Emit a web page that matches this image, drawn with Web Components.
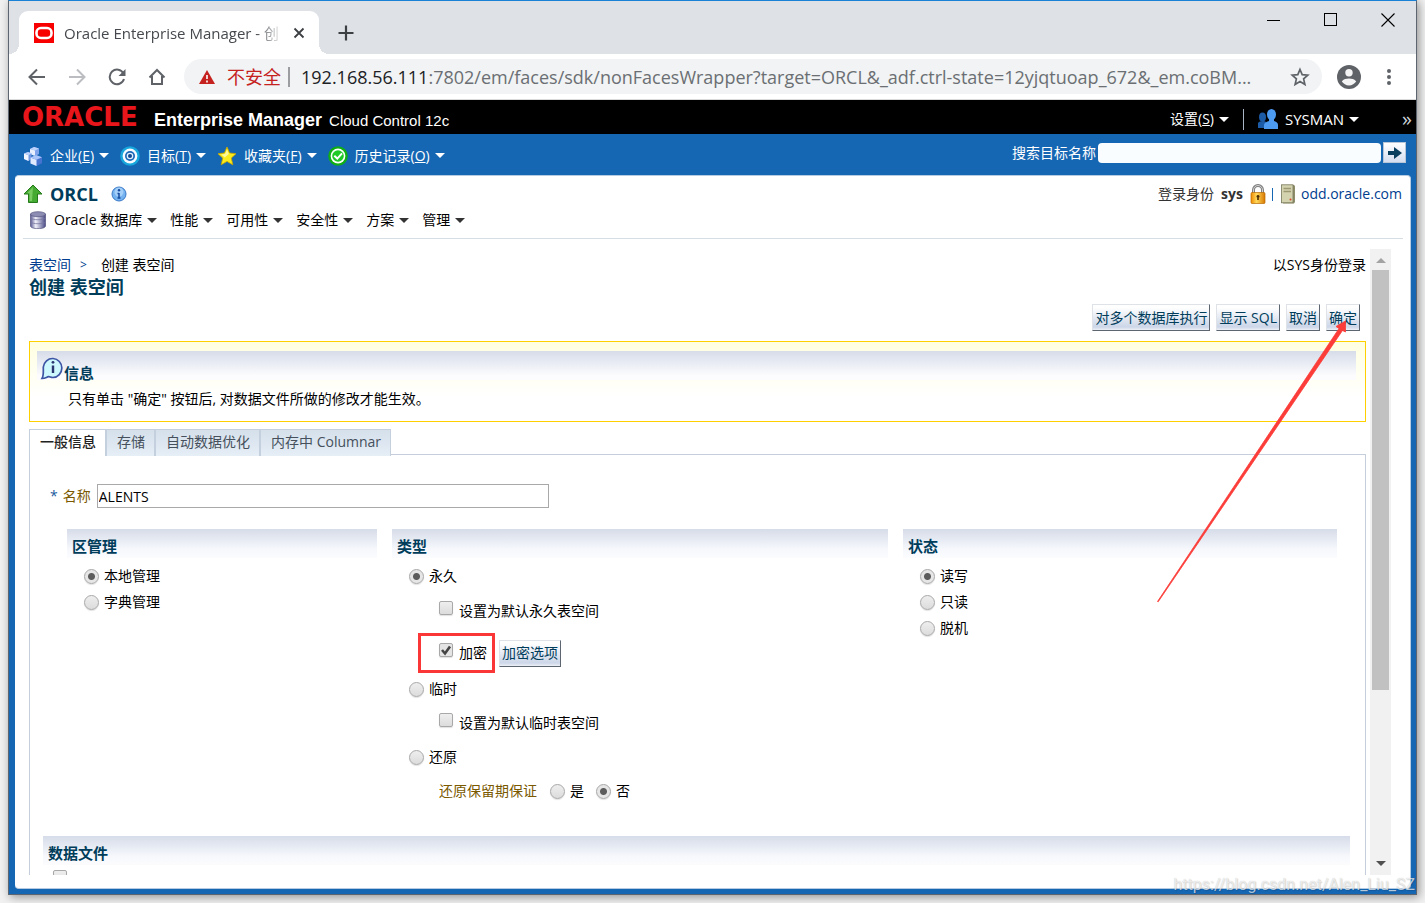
<!DOCTYPE html>
<html lang="zh-CN">
<head>
<meta charset="utf-8">
<title>Oracle Enterprise Manager - 创建 表空间</title>
<style>
html, body { margin: 0; height: 100%; }
body { background: #f1f1f1; font: 14px/20px "Open Sans", "Noto Sans CJK SC", sans-serif; color: #000; overflow: hidden; }
</style>
</head>
<body>
<app-window>
  <browser-tabs slot="chrome"></browser-tabs>
  <browser-toolbar slot="chrome"></browser-toolbar>
  <em-brand-bar></em-brand-bar>
  <em-nav-bar></em-nav-bar>
  <em-panel>
    <em-target-header></em-target-header>
    <em-scroll-area>
      <em-page-head></em-page-head>
      <em-info-box>
        <span slot="title">信息</span>
        只有单击 "确定" 按钮后, 对数据文件所做的修改才能生效。
      </em-info-box>
      <em-tab-set></em-tab-set>
      <em-tablespace-form></em-tablespace-form>
      <pointer-arrow></pointer-arrow>
    </em-scroll-area>
  </em-panel>
</app-window>
<page-watermark>https://blog.csdn.net/Alen_Liu_SZ</page-watermark>

<script>
const BASE = `
  :host, *, *::before, *::after { box-sizing: border-box; }
  button, input { font: inherit; color: inherit; margin: 0; }
  button { padding: 0; border: 0; background: none; cursor: pointer; }
  svg { display: block; flex: none; }
  a { color: inherit; text-decoration: none; }
`;

function define(name, css, html) {
  const template = document.createElement('template');
  template.innerHTML = `<style>${BASE}${css}</style>${html}`;
  customElements.define(name, class extends HTMLElement {
    constructor() {
      super();
      this.attachShadow({ mode: 'open' }).append(template.content.cloneNode(true));
    }
  });
}

/* Icons */
const ICONS = {
  favicon: [20, `<rect width="20" height="20" fill="#f80000"/><rect x="2.500" y="5" width="15" height="10" rx="4.500" fill="none" stroke="#fff" stroke-width="2.600"/>`],
  close: [12, `<path d="M1.500 1.500l9 9M10.500 1.500l-9 9" stroke="#3c4043" stroke-width="1.800"/>`],
  plus: [16, `<path d="M8 .5v15M.5 8h15" stroke="#3c4043" stroke-width="2.200"/>`],
  back: [18, `<path d="M17 9H2M9 1.500L1.500 9 9 16.500" fill="none" stroke="#5f6368" stroke-width="2"/>`],
  forward: [18, `<path d="M1 9h15M9 1.500L16.500 9 9 16.500" fill="none" stroke="#bbbdc0" stroke-width="2"/>`],
  reload: [18, `<path d="M15.500 5.500A7.300 7.300 0 1 0 16 11" fill="none" stroke="#5f6368" stroke-width="2"/><path d="M17.500 1v7h-7z" fill="#5f6368"/>`],
  home: [18, `<path d="M1.500 9.500L9 2l7.500 7.500M4 8v8h10V8" fill="none" stroke="#5f6368" stroke-width="2"/>`],
  warning: [16, `<path d="M8 1l8 14H0z" fill="#c5221f"/><path d="M8 6v4M8 11.500v2" stroke="#fff" stroke-width="1.600"/>`],
  star: [20, `<path d="M10 2.500l2.200 5.200 5.600.5-4.200 3.700 1.300 5.500L10 14.500l-4.900 2.900 1.300-5.500-4.200-3.700 5.600-.5z" fill="none" stroke="#5f6368" stroke-width="1.700"/>`],
  profile: [24, `<circle cx="12" cy="12" r="12" fill="#5f6368"/><circle cx="12" cy="7.800" r="3.700" fill="#f4f4f5"/><path d="M4.800 16.500c1.400-2.400 4.800-3 7.200-3s5.800.6 7.200 3c-1.600 2.400-4.200 3.900-7.200 3.900s-5.600-1.500-7.200-3.900z" fill="#f4f4f5"/>`],
  dots: [18, `<g fill="#5f6368"><circle cx="9" cy="3" r="2"/><circle cx="9" cy="9" r="2"/><circle cx="9" cy="15" r="2"/></g>`],
  minimize: [14, `<path d="M0 7.500h13" stroke="#000"/>`],
  maximize: [14, `<rect x=".5" y=".5" width="12" height="12" fill="none" stroke="#000"/>`],
  quit: [14, `<path d="M.5.500l13 13M13.500.500l-13 13" stroke="#000" stroke-width="1.100"/>`],
  cubes: [20, `<path d="M7 3l4-2 5 1.500V8l-4 2-5-2z" fill="#7fa4ec"/><path d="M7 3l5 1.500V10L7 8z" fill="#e8f0ff"/><path d="M7 3l4-2 5 1.500-4 2z" fill="#bcd2fb"/>
    <path d="M1 7.500L5 6l3.500 1.200V13l-3 2L1 13z" fill="#6f97e4"/><path d="M1 7.500l4.500 1.700V15L1 13z" fill="#f2f7ff"/><path d="M1 7.500L5 6l3.500 1.200-3 2z" fill="#bcd2fb"/>
    <path d="M7.500 11.500L13 9l6 2.200v6L13.500 20l-6-2.500z" fill="#4672d0"/><path d="M7.500 11.500l6 2.200V20l-6-2.500z" fill="#e0eaff"/><path d="M7.500 11.500L13 9l6 2.200-5.500 2.500z" fill="#a9c5fa"/>`],
  target: [20, `<circle cx="10" cy="10" r="9.800" fill="#17a7dc"/><circle cx="10" cy="10" r="7.400" fill="#f4faff"/><circle cx="10" cy="10" r="5" fill="#1a66b8"/><circle cx="10" cy="10" r="3.300" fill="#dff0fc"/><circle cx="10" cy="10" r="2" fill="#14488f"/>`],
  favorite: [20, `<path d="M10 1l2.600 6 6.400.7-4.700 4.400 1.500 6.700-5.800-3.400-5.800 3.400 1.500-6.700L1 7.700 7.400 7z" fill="#fbec1d" stroke="#c9a400" stroke-width=".8"/><path d="M10 3.500l1.800 4.400-4 3.500-3.500-2.900 3.800-.6z" fill="#fffa9c"/>`],
  history: [20, `<circle cx="10" cy="10" r="9.800" fill="#0fae14"/><circle cx="10" cy="10" r="7.400" fill="#fff"/><circle cx="10" cy="10" r="5.800" fill="#1fc926"/><path d="M6.300 9.800l3 2.800 4.700-5.200" fill="none" stroke="#fff" stroke-width="2"/>`],
  people: [20, `<g fill="#1c5ba5"><ellipse cx="4.500" cy="8" rx="3.500" ry="4.500"/><path d="M0 19v-5c1-2 6-3 8-1v6z"/></g><g fill="#4d9bf0"><ellipse cx="13.500" cy="5.500" rx="4.500" ry="5.500"/><path d="M11 9h5v3c3 1 4 2 4 4v4H6v-4c0-2 2-3 5-4z"/></g>`],
  go: [16, `<path d="M1 6h6V2l8 6-8 6v-4H1z" fill="#0b3f5e"/>`],
  up: [20, `<path d="M10 1l9 9h-4.500v8.500h-9V10H1z" fill="#45aa32" stroke="#247a1a"/><path d="M10 3L4 9.300h2.500V17H9z" fill="#8fd873" opacity=".7"/>`],
  info: [16, `<circle cx="8" cy="8" r="7" fill="#75b3f0" stroke="#3a78c8"/><circle cx="8" cy="6" r="4.500" fill="#b8dbfb" opacity=".7"/><path d="M8 7v5M6.500 7.500H8M6.500 12h3" stroke="#174a9c" stroke-width="1.500"/><circle cx="8" cy="4.200" r="1.200" fill="#174a9c"/>`],
  database: [18, `<defs><linearGradient id="d"><stop offset="0" stop-color="#5b5b94"/><stop offset=".35" stop-color="#f3f3fc"/><stop offset="1" stop-color="#494985"/></linearGradient></defs><path d="M1.500 3v12c0 1.600 3.300 2.600 7.500 2.600s7.500-1 7.500-2.600V3z" fill="url(#d)" stroke="#55557f" stroke-width=".7"/><ellipse cx="9" cy="3.200" rx="7.500" ry="2.500" fill="#8d8db4" stroke="#55557f" stroke-width=".7"/><path d="M1.500 7c2 2.300 13 2.300 15 0M1.500 11c2 2.300 13 2.300 15 0" fill="none" stroke="#77779f" stroke-width=".8"/>`],
  lock: [20, `<defs><linearGradient id="l"><stop offset="0" stop-color="#f08a00"/><stop offset=".4" stop-color="#ffd85a"/><stop offset="1" stop-color="#d87800"/></linearGradient></defs><path d="M5.500 10V6a4.500 4.500 0 0 1 9 0v4" fill="none" stroke="#7e7e7e" stroke-width="3"/><path d="M5.500 9V6a4.500 4.500 0 0 1 9 0v3" fill="none" stroke="#d2d2d2"/><rect x="3" y="8.500" width="14" height="11" rx="1" fill="url(#l)" stroke="#b86a00" stroke-width=".7"/><path d="M10 11v5M8.500 12.500h3" stroke="#4a2c00" stroke-width="1.600"/>`],
  host: [20, `<path d="M5 1h11l1 1v16l-1 1.500H5z" fill="#8f8f6b"/><rect x="3.500" y=".8" width="11.500" height="18" fill="#d4d3b0" stroke="#77775a" stroke-width=".8"/><path d="M5.500 4.500h7.500M5.500 7.500h7.500" stroke="#9a9972" stroke-width="1.500"/><circle cx="12.500" cy="15.500" r="1" fill="#e0442c"/>`],
  bubble: [24, `<path d="M2 22.500c1.800-3 1.300-6 1.300-11.500A9.300 9.500 0 1 1 13 21.500c-2.500 0-3-1-4.500-.8-2 .3-3 1.800-6.500 1.800z" fill="#cdf8fd" stroke="#3d55a4" stroke-width="1.700"/><path d="M13 9.500V17" stroke="#29366f" stroke-width="2.400"/><circle cx="13" cy="6.300" r="1.400" fill="#29366f"/>`]
};
const icon = (name) => {
  const [size, body] = ICONS[name];
  return `<svg width="${size}" height="${size}" viewBox="0 0 ${size} ${size}" aria-hidden="true">${body}</svg>`;
};
const CARET = `<svg width="10" height="5" viewBox="0 0 10 5" aria-hidden="true"><path d="M0 0h10L5 5z"/></svg>`;

/* Browser frame */
define('app-window', `
  :host { display: block; height: 100vh; padding: 0 8px 8px; }
  .frame { height: 100%; display: flex; flex-direction: column; border: 1px solid #5d6670; border-top-color: #1a82d6; background: #1566b3; box-shadow: 2px 2px 9px rgba(0,0,0,.4); }
  .chrome { flex: none; }
  .page { flex: 1; min-height: 0; display: flex; flex-direction: column; }
`, `<div class="frame"><header class="chrome"><slot name="chrome"></slot></header><main class="page"><slot></slot></main></div>`);

define('browser-tabs', `
  :host { display: flex; justify-content: space-between; height: 53px; background: #dee1e6; color: #45494d; font-size: 15px; }
  .left { display: flex; align-items: flex-end; padding-left: 10px; }
  .tab { position: relative; display: flex; align-items: center; height: 43px; width: 300px; padding: 0 14px 0 15px; background: #fff; border-radius: 9px 9px 0 0; }
  .tab::before, .tab::after { content: ""; position: absolute; bottom: 0; width: 10px; height: 10px; }
  .tab::before { right: 100%; background: radial-gradient(circle at 0 0, transparent 10px, #fff 10px); }
  .tab::after { left: 100%; background: radial-gradient(circle at 100% 0, transparent 10px, #fff 10px); }
  .title { flex: 1; min-width: 0; margin: 0 10px; white-space: nowrap; overflow: hidden; mask-image: linear-gradient(90deg, #000 88%, transparent); }
  .new { height: 43px; margin-left: 19px; }
  .controls { display: flex; gap: 43px; padding: 12px 21px 0 0; align-items: flex-start; }
`, `<div class="left"><div class="tab">${icon('favicon')}<span class="title">Oracle Enterprise Manager - 创</span><button aria-label="关闭标签页">${icon('close')}</button></div><button class="new" aria-label="新标签页">${icon('plus')}</button></div>
  <div class="controls"><button aria-label="最小化">${icon('minimize')}</button><button aria-label="最大化">${icon('maximize')}</button><button aria-label="关闭">${icon('quit')}</button></div>`);

define('browser-toolbar', `
  :host { display: flex; align-items: center; height: 46px; padding: 0 18px 0 19px; background: #fff; border-bottom: 1px solid #d9dadb; }
  nav { display: flex; gap: 22px; margin-right: 18px; }
  .box { flex: 1; min-width: 0; height: 35px; display: flex; align-items: center; padding: 0 12px 0 15px; border-radius: 18px; background: #f1f3f4; }
  .warn { display: flex; align-items: center; gap: 12px; color: #c5221f; font-size: 18px; padding-right: 7px; border-right: 2px solid #9b9da0; line-height: 20px; }
  .url { flex: 1; min-width: 0; margin-left: 11px; font-size: 18px; line-height: 26px; color: #6b6f73; white-space: nowrap; overflow: hidden; outline: 0; }
  .url b { font-weight: 400; color: #202124; }
  .profile { margin: 0 15px; }
  .dots { width: 18px; margin-left: 4px; }
`, `<nav><button aria-label="后退">${icon('back')}</button><button aria-label="前进">${icon('forward')}</button><button aria-label="重新加载">${icon('reload')}</button><button aria-label="主页">${icon('home')}</button></nav>
  <div class="box"><div class="warn">${icon('warning')}<span>不安全</span></div><div class="url" role="textbox" contenteditable="true" spellcheck="false" aria-label="地址"><b>192.168.56.111</b>:7802/em/faces/sdk/nonFacesWrapper?target=ORCL&amp;_adf.ctrl-state=12yjqtuoap_672&amp;_em.coBM...</div><button aria-label="收藏">${icon('star')}</button></div>
  <button class="profile" aria-label="用户">${icon('profile')}</button><button class="dots" aria-label="菜单">${icon('dots')}</button>`);

/* Enterprise Manager header */
define('em-menu', `
  :host { display: block; }
  button { display: flex; align-items: center; height: 20px; white-space: nowrap; }
  button > svg { fill: var(--caret, #fff); }
  .label { margin-right: 5px; }
  ::slotted(svg) { margin-right: 7px; flex: none; }
`, `<button aria-haspopup="true"><slot name="icon"></slot><span class="label"><slot></slot></span>${CARET}</button>`);
const slotted = (name) => icon(name).replace('<svg', '<svg slot="icon"');

define('em-brand-bar', `
  :host { flex: none; display: flex; align-items: center; justify-content: space-between; height: 34px; padding: 4px 4px 0 13px; background: #000; color: #fff; }
  .brand { display: flex; align-items: baseline; font-family: "Liberation Sans", sans-serif; line-height: 28px; white-space: nowrap; }
  .logo { width: 132px; color: #e8161b; font: 700 26px/28px "DejaVu Sans", sans-serif; }
  .product { font-size: 18px; font-weight: 700; }
  .edition { margin-left: 7px; font-size: 15px; }
  .user { display: flex; align-items: center; }
  .bar { width: 1px; height: 21px; margin: 0 14px; background: #a9b5c4; }
  .more { margin-left: 43px; font-size: 20px; line-height: 20px; color: #cfd5da; }
  em-menu.name { font-size: 15px; }
`, `<div class="brand"><span class="logo">ORACLE</span><span class="product">Enterprise Manager</span><span class="edition">Cloud Control 12c</span></div>
  <div class="user"><em-menu>设置(<u>S</u>)</em-menu><span class="bar"></span><em-menu class="name">${slotted('people')}SYSMAN</em-menu><button class="more" aria-label="更多">»</button></div>`);

define('em-nav-bar', `
  :host { flex: none; display: flex; align-items: center; justify-content: space-between; height: 41px; padding: 2px 10px 0 14px; color: #fff; }
  nav { display: flex; gap: 11px; }
  form { display: flex; align-items: center; margin-bottom: 6px; }
  input { width: 283px; height: 20px; margin: 0 2px; border: 0; border-radius: 4px; background: #f9fdff; color: #000; padding: 0 4px; }
  .go { width: 23px; height: 21px; display: grid; place-items: center; background: linear-gradient(#fff, #d6dff0); border: 1px solid #b9c6d8; }
`, `<nav><em-menu>${slotted('cubes')}企业(<u>E</u>)</em-menu><em-menu>${slotted('target')}目标(<u>T</u>)</em-menu><em-menu>${slotted('favorite')}收藏夹(<u>F</u>)</em-menu><em-menu>${slotted('history')}历史记录(<u>O</u>)</em-menu></nav>
  <form><label for="q">搜索目标名称</label><input id="q" type="text"><button class="go" type="button" aria-label="搜索">${icon('go')}</button></form>`);

define('em-panel', `
  :host { flex: 1; min-height: 0; display: flex; flex-direction: column; margin: 0 5px 5px 6px; padding: 0 7px 13px 8px; background: #fff; border: 1px solid #b5cbe2; border-width: 1px 1px 1px 0; border-radius: 4px; }
`, `<slot></slot>`);

define('em-target-header', `
  :host { flex: none; display: block; height: 63px; padding-top: 7px; border-bottom: 1px solid #d6dde5; }
  .top, .menus, .who, h1 { display: flex; align-items: center; }
  .top { justify-content: space-between; height: 22px; }
  h1 { margin: 0; color: #003d5b; font-size: 18px; line-height: 22px; font-weight: 700; gap: 7px; }
  h1 svg:last-child { margin-left: 6px; }
  .who { color: #333; }
  .who b { margin: 0 5px 0 7px; }
  .who i { width: 1px; height: 13px; margin: 0 5px 0 4px; background: #1566b3; }
  .who a { margin: 0 1px 0 3px; color: #003d8f; }
  .menus { gap: 13px; height: 28px; padding: 2px 0 0 6px; --caret: #333; }
`, `<div class="top"><h1>${icon('up')}ORCL ${icon('info')}</h1><div class="who">登录身份<b>sys</b>${icon('lock')}<i></i>${icon('host')}<a href="#host">odd.oracle.com</a></div></div>
  <div class="menus"><em-menu>${slotted('database')}Oracle 数据库</em-menu><em-menu>性能</em-menu><em-menu>可用性</em-menu><em-menu>安全性</em-menu><em-menu>方案</em-menu><em-menu>管理</em-menu></div>`);

define('em-scroll-area', `
  :host { flex: 1; min-height: 0; display: flex; margin: 10px 12px 0 6px; }
  .view { position: relative; flex: 1; min-width: 0; overflow: hidden; padding-top: 6px; }
  .bar { flex: none; width: 21px; margin-left: 4px; background: #f1f1f1; display: flex; flex-direction: column; align-items: center; padding: 9px 0; }
  .thumb { flex: none; width: 17px; height: 420px; max-height: 69%; margin-top: 7px; background: #c1c1c1; }
  .down { margin-top: auto; }
`, `<div class="view"><slot></slot></div>
  <div class="bar" aria-hidden="true"><svg width="10" height="5"><path d="M0 5h10L5 0z" fill="#a3a3a3"/></svg><div class="thumb"></div><svg class="down" width="10" height="5"><path d="M0 0h10L5 5z" fill="#505050"/></svg></div>`);

define('em-button', `
  :host { display: block; }
  button { display: block; height: 27px; padding: 0 2px; color: #003d5b; white-space: nowrap; line-height: 24px; background: linear-gradient(#fff 10%, #ccd6e8 88%, #eef2f8); border: 1px solid; border-color: #dfe3e8 #5c6570 #5c6570 #dfe3e8; }
`, `<button type="button"><slot></slot></button>`);

define('em-page-head', `
  :host { display: block; }
  .line { display: flex; justify-content: space-between; line-height: 20px; }
  nav { display: flex; }
  a { color: #003d8f; }
  .sep { margin: 0 14px 0 9px; color: #003d8f; font-size: 12px; }
  h2 { margin: 0; color: #003d5b; font-size: 18px; line-height: 24px; }
  .actions { display: flex; justify-content: flex-end; gap: 6px; padding: 5px 6px 0 0; }
`, `<div class="line"><nav aria-label="路径"><a href="#tablespaces">表空间</a><span class="sep">&gt;</span><span>创建 表空间</span></nav><span>以SYS身份登录</span></div>
  <h2>创建 表空间</h2>
  <div class="actions"><em-button>对多个数据库执行</em-button><em-button>显示 SQL</em-button><em-button>取消</em-button><em-button>确定</em-button></div>`);

define('em-info-box', `
  :host { display: block; height: 81px; margin-top: 10px; padding: 9px 9px 0 7px; border: 1px solid #ffd000; background: linear-gradient(#ffffe1, #fff 70%); }
  h3 { display: flex; align-items: center; margin: 0; height: 29px; padding: 4px 0 0 3px; background: linear-gradient(#d6dce9, #fcfcfe 85%); color: #003d5b; font-size: 15px; line-height: 20px; }
  h3 span { margin-top: 10px; }
  p { margin: 9px 0 0 31px; line-height: 20px; }
`, `<h3>${icon('bubble')}<span><slot name="title"></slot></span></h3><p><slot></slot></p>`);

define('em-tab-set', `
  :host { position: relative; display: flex; width: fit-content; height: 27px; margin: 7px 0 -2px; }
  button { height: 27px; padding: 0 9px 2px 10px; color: #45505c; background: linear-gradient(#d5e0eb, #e6eef6); border: 1px solid #c5d0de; border-width: 1px 2px 0 0; }
  button:first-of-type { color: #222; font-weight: 500; background: #fff; border-left-width: 1px; }
  button:last-of-type { border-right-width: 1px; }
`, `<button role="tab" aria-selected="true">一般信息</button><button role="tab">存储</button><button role="tab">自动数据优化</button><button role="tab">内存中 Columnar</button>`);

/* Titled section with a gradient heading */
define('em-section', `
  :host { display: block; min-width: 0; }
  h3 { margin: 0; height: 29px; padding: 7px 5px 0; color: #003d5b; font-size: 15px; line-height: 20px; background: linear-gradient(#d6dce9, #f6f8fc 70%, #fcfcfe); }
`, `<h3><slot name="title"></slot></h3><slot></slot>`);

define('em-tablespace-form', `
  :host { display: block; border: 1px solid #c5cedd; padding: 29px 15px 0 13px; }
  .name { display: flex; align-items: center; padding-left: 7px; height: 24px; }
  .name label { margin: 0 6px 0 5px; color: #7a5900; }
  .star { color: #1a5a9c; }
  .name input { width: 452px; height: 24px; padding: 0 1px; border: 1px solid #a9a9a9; }
  .columns { display: grid; grid-template-columns: 310fr 496fr 434fr; gap: 15px; margin: 21px 13px 32px 24px; }
  .rows { display: flex; flex-direction: column; padding: 5px 0 0 17px; }
  .type { gap: 8px; }
  label { display: flex; align-items: center; }
  .row { display: flex; align-items: center; height: 26px; }
  .sub { padding-left: 30px; }
  .first { height: 28px; }
  .encrypt { position: relative; height: 35px; padding-top: 5px; gap: 12px; }
  .mark { position: absolute; left: 9px; top: 0; width: 77px; height: 40px; border: 3px solid #fb3636; pointer-events: none; }
  input[type=radio], input[type=checkbox] { appearance: none; flex: none; border: 1px solid #a8a8a8; background: linear-gradient(#eee, #dcdcdc); box-shadow: 0 1px 1px rgba(0,0,0,.12); }
  input[type=radio] { width: 15px; height: 15px; margin-right: 5px; border-radius: 50%; }
  input[type=radio]:checked { background: radial-gradient(circle, #5c5c5c 3px, #e6e6e6 4px); }
  input[type=checkbox] { width: 14px; height: 14px; margin: 0 6px 6px 0; border-radius: 2px; }
  input[type=checkbox]:checked { background: #e4e4e4 url("data:image/svg+xml,%3Csvg xmlns='http://www.w3.org/2000/svg' viewBox='0 0 12 12'%3E%3Cpath d='M2 6l3 3.500L10 2.500' fill='none' stroke='%23444' stroke-width='2.600'/%3E%3C/svg%3E"); }
  .keep { color: #7a5900; margin-right: 13px; }
  .gap { margin-right: 12px; }
  .files { margin: 0 0 40px; }
  .files input { display: block; margin: 5px 0 0 10px; }
`, `<form>
  <div class="name"><span class="star">*</span><label for="name">名称</label><input id="name" type="text" value="ALENTS"></div>
  <div class="columns">
    <em-section><span slot="title">区管理</span><div class="rows">
      <label class="row"><input type="radio" name="extent" checked>本地管理</label>
      <label class="row"><input type="radio" name="extent">字典管理</label></div></em-section>
    <em-section><span slot="title">类型</span><div class="rows type">
      <label class="row"><input type="radio" name="type" checked>永久</label>
      <label class="row sub first"><input type="checkbox">设置为默认永久表空间</label>
      <div class="row sub encrypt"><label><input type="checkbox" checked>加密</label><em-button>加密选项</em-button><span class="mark"></span></div>
      <label class="row"><input type="radio" name="type">临时</label>
      <label class="row sub"><input type="checkbox">设置为默认临时表空间</label>
      <label class="row"><input type="radio" name="type">还原</label>
      <div class="row sub" role="radiogroup" aria-labelledby="keep"><span id="keep" class="keep">还原保留期保证</span><label class="gap"><input type="radio" name="keep">是</label><label><input type="radio" name="keep" checked>否</label></div></div></em-section>
    <em-section><span slot="title">状态</span><div class="rows">
      <label class="row"><input type="radio" name="status" checked>读写</label>
      <label class="row"><input type="radio" name="status">只读</label>
      <label class="row"><input type="radio" name="status">脱机</label></div></em-section>
  </div>
  <em-section class="files"><span slot="title">数据文件</span><input type="checkbox" aria-label="数据文件"></em-section>
</form>`);

/* Annotation laid over the page, pointing at the confirm button */
define('pointer-arrow', `
  :host { position: absolute; top: 71px; right: 18px; pointer-events: none; }
`, `<svg width="192" height="284" viewBox="0 0 192 284" aria-hidden="true"><path d="M1.500 281.500L183 8.500 180 6.500 189.500 1 189.500 12 186.500 10.500 2.200 281.800z" fill="#fb3c38" stroke="#fb3c38" stroke-width=".8"/></svg>`);

define('page-watermark', `
  :host { position: absolute; right: 10px; bottom: 8px; font: 16px/20px Roboto, sans-serif; color: rgba(255,255,255,.7); text-shadow: 0 0 1px rgba(0,0,0,.25), 1px 1px 1px rgba(0,0,0,.1); pointer-events: none; }
`, `<slot></slot>`);
</script>
</body>
</html>
